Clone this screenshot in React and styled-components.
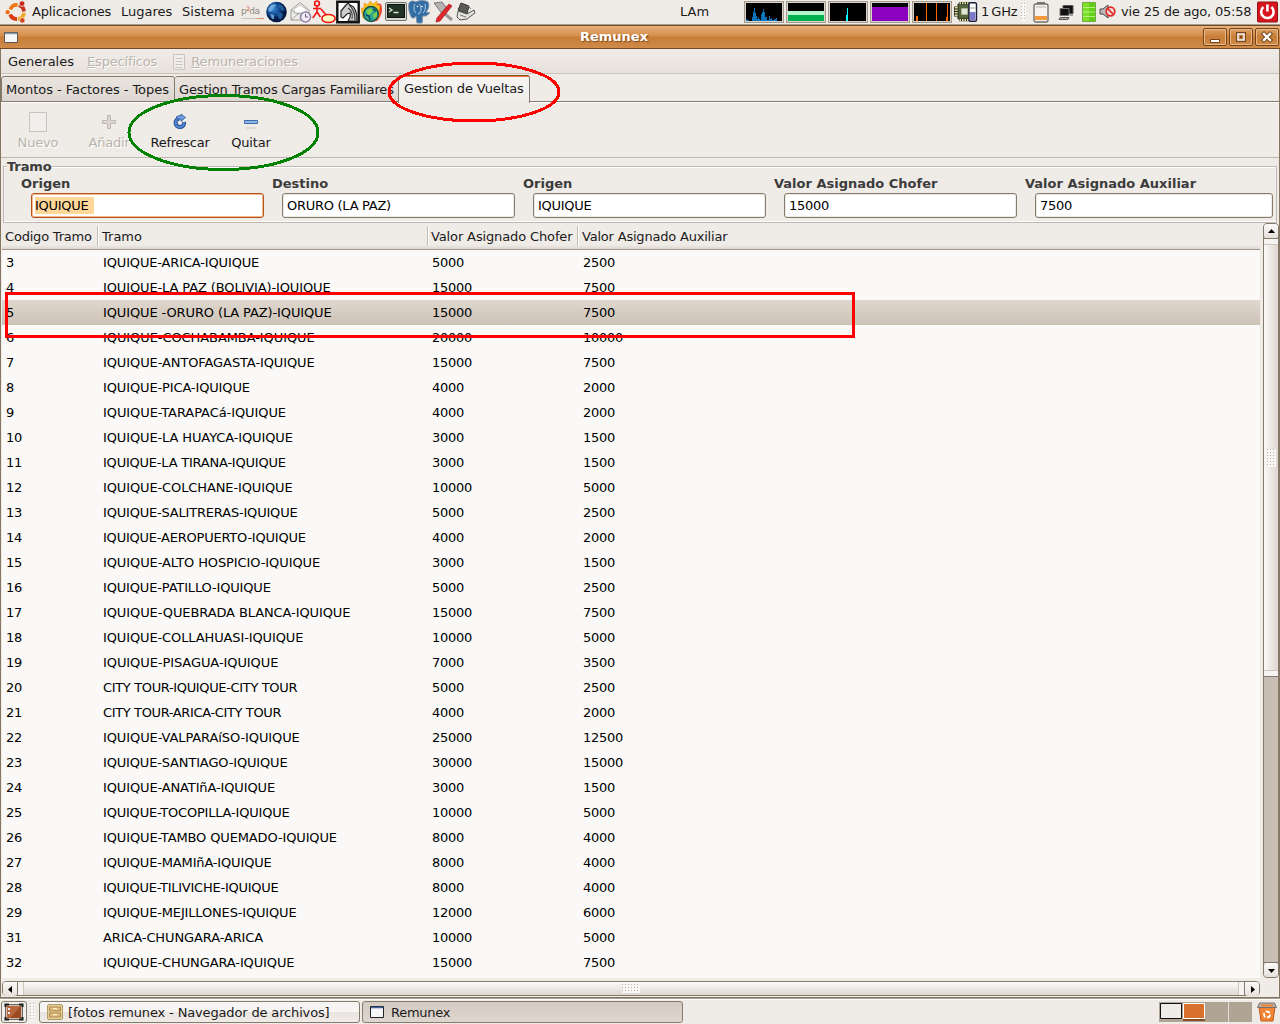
import React from "react";
import styled, { createGlobalStyle, css } from "styled-components";

const Global = createGlobalStyle`
  * { box-sizing: border-box; }
  html, body { margin: 0; padding: 0; overflow: hidden; }
  body { font: 13px/16px "DejaVu Sans", sans-serif; color: #1a1a1a; background: #efebe7; cursor: default; }
  svg { display: block; flex: none; }
`;

const Desktop = styled.div`
  position: relative;
  width: 1280px;
  height: 1024px;
  display: flex;
  flex-direction: column;
  overflow: hidden;
  white-space: nowrap;
  background: #efebe7;
`;

/* ---------- top panel ---------- */
const Panel = styled.header`
  height: 25px;
  flex: none;
  display: flex;
  align-items: center;
  background: #efebe6;
  border-bottom: 1px solid #a89c8c;
`;
const Slot = styled.div`
  flex: none;
  width: ${(p) => p.$w}px;
  margin-left: ${(p) => p.$gap || 0}px;
  letter-spacing: ${(p) => p.$ls || 0}px;
  word-spacing: ${(p) => p.$ws || 0}px;
`;
const Graph = styled.div`
  flex: none;
  width: 40px;
  height: 22px;
  margin-right: 2px;
  padding: 1px;
  border: 1px solid #a39a8e;
  background: #d9d3cb;
  svg { background: #000; }
`;
const dots = "conic-gradient(from 270deg at 1px 1px, #b9b0a5 90deg, #f8f6f4 0) 0 0 / 3px 3px";
const Grip = styled.i`
  flex: none;
  width: 5px;
  height: 18px;
  margin: 0 1px 0 ${(p) => p.$gap}px;
  background: ${dots};
`;

/* ---------- window ---------- */
const TitleBar = styled.div`
  height: 24px;
  flex: none;
  display: grid;
  grid-template-columns: 80px 1fr 80px;
  align-items: center;
  border-top: 1px solid #6e4a26;
  border-bottom: 1px solid #704a24;
  background: linear-gradient(#e9b27a 0, #e0a267 3px, #d58f4c 10px, #c67d37 11px, #d08b49 22px);
`;
const Title = styled.b`
  text-align: center;
  color: #fff;
  padding-right: 52px;
  text-shadow: 1px 1px 1px #7c4818;
`;
const WinButtons = styled.div`
  display: flex;
  gap: 2px;
  justify-content: flex-end;
  padding-right: 1px;
`;
const WinButton = styled.div`
  width: 24px;
  height: 18px;
  border: 1px solid #77431a;
  border-radius: 2px;
  box-shadow: inset 0 0 0 1px #e9b884;
  background: linear-gradient(#dda166, #c67d37 50%, #d08b49);
`;
const Body = styled.main`
  height: 949px;
  flex: none;
  display: flex;
  flex-direction: column;
  border-left: 1px solid #857563;
  border-right: 1px solid #857563;
  border-bottom: 1px solid #857563;
`;
const MenuBar = styled.nav`
  height: 25px;
  flex: none;
  display: flex;
  align-items: center;
  padding: 1px 7px 0;
  background: linear-gradient(#efebe7, #e8e2dd);
  border-bottom: 1px solid #cbc2b9;
`;
const MenuItem = styled.div`
  display: flex;
  align-items: center;
  gap: 5px;
  margin-right: ${(p) => p.$after || 0}px;
  letter-spacing: ${(p) => p.$ls || 0}px;
  ${(p) => p.$off && css`color: #b9b3ac; text-shadow: 1px 1px 0 #fff;`}
  u { text-underline-offset: 1px; }
`;
const Tabs = styled.div`
  height: 29px;
  flex: none;
  display: flex;
  align-items: flex-end;
  background: linear-gradient(#efebe7 27px, #857b6d 27px, #857b6d 28px, #fff 28px);
`;
const Tab = styled.div`
  width: ${(p) => p.$w}px;
  height: 26px;
  margin-bottom: 1px;
  padding: 5px 0 0 ${(p) => p.$pad}px;
  border: 1px solid #857b6d;
  border-left-width: ${(p) => (p.$first || p.$on ? 1 : 0)}px;
  border-radius: 3px 3px 0 0;
  background: linear-gradient(#eae5e0, #ddd6d0);
  letter-spacing: ${(p) => p.$ls || 0}px;
  ${(p) => p.$on && css`
    height: 28px;
    margin: 0 0 0 -1px;
    padding-top: 5px;
    border-top-color: #8a4a22;
    border-bottom: 0;
    background: linear-gradient(#f2763a 1px, #f7f5f3 1px, #efebe7);
  `}
`;
const ToolBar = styled.div`
  height: 55px;
  flex: none;
  display: flex;
  padding-top: 9px;
  border-bottom: 1px solid #bfb8af;
`;
const Tool = styled.div`
  width: ${(p) => p.$w}px;
  display: flex;
  flex-direction: column;
  align-items: center;
  gap: 3px;
  letter-spacing: ${(p) => p.$ls || 0}px;
  ${(p) => p.$off && css`color: #b9b3ac; text-shadow: 1px 1px 0 #fff;`}
`;
const Group = styled.section`
  height: 65px;
  flex: none;
  padding: 0 2px;
  display: flex;
  flex-direction: column;
`;
const Legend = styled.div`
  height: 17px;
  display: flex;
  align-items: center;
  font-weight: bold;
  color: #3c3c3c;
  letter-spacing: -0.1px;
  &::before, &::after {
    content: "";
    height: 2px;
    margin-top: 1px;
    background: linear-gradient(#bfb8b2 1px, #fff 1px);
  }
  &::before { width: 4px; }
  &::after { flex: 1; }
`;
const Fields = styled.div`
  flex: 1;
  display: grid;
  grid-template-columns: repeat(4, 251px) 1fr;
  padding: 0 3px 0 17px;
  margin-top: -8px;
  border: solid #bfb8b2;
  border-width: 0 1px 1px;
  background: linear-gradient(#fff, #fff) bottom / 100% 1px no-repeat;
`;
const Field = styled.label`
  padding-top: 9px;
  padding-right: ${(p) => (p.$last ? 0 : 8)}px;
  font-weight: bold;
  color: #3c3c3c;
`;
const Entry = styled.div`
  height: 25px;
  margin: 1px 0 0 10px;
  padding: 4px 4px;
  border: 1px solid ${(p) => (p.$focus ? "#b5531c" : "#857b6d")};
  border-radius: 3px;
  box-shadow: inset 0 0 0 1px ${(p) => (p.$focus ? "#f6b98c" : "#eeebe6")};
  background: #fff;
  color: #000;
  font-weight: normal;
  letter-spacing: -0.27px;
  mark { color: inherit; background: #ffd799; padding: 1px 5px 1px 0; margin-left: -1px; }
`;

/* ---------- table ---------- */
const Content = styled.div`
  flex: 1;
  min-height: 0;
  display: grid;
  grid-template-columns: 1259px 16px;
  column-gap: 3px;
  grid-template-rows: 755px 15px;
  row-gap: 3px;
`;
const Table = styled.div`
  margin-left: 1px;
  background: #faf9f7;
  color: #000;
  overflow: hidden;
`;
const HeadRow = styled.div`
  height: 27px;
  display: grid;
  grid-template-columns: 96px 330px 150px 1fr;
  align-items: center;
  background: linear-gradient(#efebe7 22px, #ddd7d0);
  border-bottom: 1px solid #a4968c;
`;
const HeadCell = styled.div`
  height: 20px;
  padding: 3px 0 0 ${(p) => p.$pad}px;
  color: #1a1a1a;
  letter-spacing: ${(p) => p.$ls}px;
  border-right: ${(p) => (p.$last ? 0 : 1)}px solid #c3bcb4;
  box-shadow: ${(p) => (p.$last ? "none" : "1px 0 #fff")};
`;
const Row = styled.div`
  height: 25px;
  display: grid;
  grid-template-columns: 97px 329px 151px 1fr;
  align-items: center;
  padding-left: 4px;
  letter-spacing: -0.27px;
  background: ${(p) => (p.$on ? "linear-gradient(#dfd7ce, #cdc2b6)" : "transparent")};
`;
const Name = styled.span`
  letter-spacing: ${(p) => p.$ls}px;
`;

/* ---------- scrollbars ---------- */
const VBar = styled.div`
  display: flex;
  flex-direction: column;
  border: 1px solid #857b6d;
  border-radius: 4px;
  background: #c9beb3;
`;
const HBar = styled.div`
  margin-left: 1px;
  display: flex;
  border: 1px solid #857b6d;
  border-radius: 4px;
  background: linear-gradient(#fbfaf9, #ded7d0);
`;
const ArrowBox = styled.div`
  width: 14px;
  height: 14px;
  flex: none;
  display: grid;
  place-items: center;
  border-radius: 3px;
  background: linear-gradient(#fbfaf9, #e6e0da);
`;
const VThumb = styled.div`
  height: 439px;
  display: grid;
  place-items: center;
  border: solid #857b6d;
  border-width: 1px 0;
  background:
    linear-gradient(#f6f4f2 5px, #cfc8c0 5px, #cfc8c0 6px, transparent 6px, transparent calc(100% - 6px), #cfc8c0 calc(100% - 6px), #cfc8c0 calc(100% - 5px), #f6f4f2 calc(100% - 5px)),
    linear-gradient(90deg, #fbfaf9, #ded5ce);
`;
const Trough = styled.div`
  flex: 1;
  border-bottom: 1px solid #857b6d;
`;
const HThumb = styled.div`
  flex: 1;
  display: grid;
  place-items: center;
  border: solid #857b6d;
  border-width: 0 1px;
  background:
    linear-gradient(90deg, #f6f4f2 5px, #cfc8c0 5px, #cfc8c0 6px, transparent 6px, transparent calc(100% - 6px), #cfc8c0 calc(100% - 6px), #cfc8c0 calc(100% - 5px), #f6f4f2 calc(100% - 5px)),
    linear-gradient(#fbfaf9, #ded7d0);
`;
const Dots = styled.i`
  width: ${(p) => p.$w}px;
  height: ${(p) => p.$h}px;
  background: ${dots};
`;

/* ---------- bottom panel ---------- */
const TaskBar = styled.footer`
  flex: 1;
  display: flex;
  align-items: center;
  padding-top: 2px;
  background: linear-gradient(#a89c8c 1px, #fff 1px, #fff 2px, #efebe6 2px);
`;
const Task = styled.div`
  width: ${(p) => p.$w}px;
  height: 22px;
  margin-right: 2px;
  padding-left: 7px;
  display: flex;
  align-items: center;
  gap: ${(p) => p.$gap}px;
  border: 1px solid #857b6d;
  border-radius: 3px;
  letter-spacing: ${(p) => p.$ls || 0}px;
  background: ${(p) => (p.$on ? "linear-gradient(#d3cac2, #ddd6cf)" : "linear-gradient(#f7f5f3 50%, #e9e4df 50%, #efebe7)")};
  span { padding-top: 2px; }
`;
const ShowDesktop = styled.div`
  width: 26px;
  height: 22px;
  margin-left: 1px;
  display: grid;
  place-items: center;
  border: 1px solid #857b6d;
  border-radius: 3px;
  background: #f2efec;
`;

const Annotations = styled.svg`
  position: absolute;
  left: 0;
  top: 0;
  pointer-events: none;
`;

const UbuntuLogo = () => (
  <svg width="22" height="24" viewBox="0 0 22 24">
    <g fill="none" strokeWidth="3.800">
      <path d="M5.400 9.500A7 7 0 0 1 12.600 5" stroke="#ee7a16" />
      <path d="M13.800 5.200A7 7 0 0 1 19 11.500" stroke="#c9301d" />
      <path d="M19 13A7 7 0 0 1 13 19" stroke="#f2a81c" />
      <path d="M12 19A7 7 0 0 1 5.200 14.500" stroke="#dc3a12" />
    </g>
    <circle cx="2.600" cy="12.200" r="2.100" fill="#f06a12" />
    <circle cx="17" cy="3.600" r="2.800" fill="#c9281a" stroke="#efebe6" strokeWidth=".8" />
    <circle cx="17.300" cy="20.400" r="2.700" fill="#d6421c" stroke="#efebe6" strokeWidth=".8" />
  </svg>
);
const BrandText = styled.div`
  font-size: 9px;
  line-height: 10px;
  color: #8c8680;
  letter-spacing: -0.6px;
  padding-bottom: 3px;
  background: linear-gradient(90deg, #c9c4be 70%, #e08a62 70%) 0 12px / 100% 1px no-repeat;
  sup { font-size: 6px; color: #d0401c; line-height: 0; vertical-align: 3px; }
`;
const Globe = () => (
  <svg width="22" height="22" viewBox="0 0 22 22">
    <defs><radialGradient id="glb" cx=".35" cy=".35"><stop offset="0" stopColor="#3b8ad6" /><stop offset=".6" stopColor="#11488f" /><stop offset="1" stopColor="#041a44" /></radialGradient></defs>
    <circle cx="10.500" cy="11" r="10.300" fill="url(#glb)" />
    <path d="M2 8l3-4 4-1 1 2-3 2-1 3-3 1zM4 13l4 1 0 4-2 0z" fill="#8cc4ec" opacity=".7" />
    <path d="M13 3l4 2 2 4-3 1-2-3-2-1zM11 11l5 1 1 3-3 4-2-3z" fill="#2a66a8" opacity=".8" />
  </svg>
);
const Mail = () => (
  <svg width="22" height="22" viewBox="0 0 22 22">
    <path d="M1 9L10 1.500 19 9v10H1z" fill="#ececea" stroke="#9a9a96" />
    <path d="M4 8l6-4 6 4v4H4z" fill="#fff" stroke="#c4c4c0" />
    <path d="M1 19l8-7 5 3M1 9l8 5" fill="none" stroke="#a8a8a4" />
    <circle cx="15.500" cy="16" r="5" fill="#f1eef6" stroke="#9482a8" strokeWidth="1.600" />
    <path d="M15.500 13v3h2.500" fill="none" stroke="#665878" />
  </svg>
);
const Actor = () => (
  <svg width="24" height="24" viewBox="0 0 24 24" fill="none" stroke="#f01414" strokeWidth="1.600">
    <circle cx="5" cy="3.400" r="2.400" />
    <path d="M5 6v6L.8 18M5 12l3.400 5M1 8.500h8M9 9l6 7" />
    <ellipse cx="16.500" cy="18.500" rx="6.600" ry="4" fill="#ffffc4" />
  </svg>
);
const Horse = () => (
  <svg width="24" height="24" viewBox="0 0 24 24">
    <path d="M1.300 1.800h21.400v20.400H1.300z" fill="#fff" stroke="#111" strokeWidth="2.400" />
    <path d="M5 11l5-6 2-2 2 2c4 1 7 6 7 16h-9c2-3 3-5 2-8l-3 1-4 4-2-1z" fill="#cfcfcf" stroke="#222" strokeWidth="1.200" />
    <path d="M13 5c4 3 6 8 6 15M12 8c3 2 5 6 4 11" stroke="#444" strokeWidth="1.200" fill="none" />
  </svg>
);
const FireGlobe = () => (
  <svg width="22" height="22" viewBox="0 0 22 22">
    <path d="M14 2l6 1c2 5 1 12-4 17l-8 1z" fill="#e8402a" />
    <path d="M0 7l3 0 0-5 4 2 2-4 3 3 4-3 0 4 3 0-1 12-8 4-8-3z" fill="#f7c21c" stroke="#ee8a1c" strokeWidth=".6" />
    <circle cx="10" cy="13" r="7.400" fill="#2aa596" stroke="#17564c" strokeWidth="1.500" />
    <path d="M5 10l4-3 3 2-2 4-3 1zM12 13l4-2v4l-3 3z" fill="#7fd04c" />
    <path d="M5 14l3 1 1 4M12 8l3 2" stroke="#123e58" strokeWidth="1.400" fill="none" />
  </svg>
);
const Term = () => (
  <svg width="22" height="20" viewBox="0 0 22 20">
    <rect x=".5" y=".5" width="21" height="18" rx="1.500" fill="#d8d8d2" stroke="#70706a" />
    <rect x="2.500" y="2.500" width="17" height="13" fill="#233323" stroke="#0c170c" />
    <path d="M4 6l3 2-3 2M8.500 10.500h5" fill="none" stroke="#d9ecd9" strokeWidth="1.300" />
  </svg>
);
const Elephant = () => (
  <svg width="23" height="24" viewBox="0 0 23 24">
    <path d="M1 3c2-3 5-2 7-1 3-2 9-2 12 0 2 4 0 8-2 10l4 1-4 3h-3c-1 1 0 4-1 7H9l-1-7-2 2H4C1 14 0 7 1 3z" fill="#336da5" stroke="#7d93a8" />
    <path d="M7 4c-2 4-1 7 1 9M11 4c2 2 3 5 1 9l-2 1M17 4c1 4 0 7-2 9" fill="none" stroke="#c2d6e8" strokeWidth=".9" />
    <circle cx="9.500" cy="6.500" r=".8" fill="#fff" /><circle cx="14" cy="6.500" r=".8" fill="#fff" />
  </svg>
);
const Tools = () => (
  <svg width="20" height="22" viewBox="0 0 20 22">
    <path d="M0 2l8-1 4 5-3 8z" fill="#b4b4b4" stroke="#666" strokeWidth=".8" />
    <path d="M10 12l8 7" stroke="#999" strokeWidth="3" />
    <path d="M15 3l3 2L6 20l-4 1 1-4z" fill="#e0262a" stroke="#a01418" strokeWidth=".7" />
  </svg>
);
const Hand = () => (
  <svg width="20" height="20" viewBox="0 0 20 20">
    <path d="M5 1l8 3-2 8-9-4z" fill="#5a5a5a" stroke="#333" />
    <path d="M2 9l9 3 7-4 1 3-8 6-7 1-3-3z" fill="#e4e2de" stroke="#555" />
    <path d="M4 13l6 2M12 4l3 3" stroke="#777" />
  </svg>
);
const Cpu = () => (
  <svg width="24" height="20" viewBox="0 0 24 20">
    <path d="M4 2h13v15H4z" fill="#54643c" stroke="#20281a" />
    <path d="M5 1.200h11M5 18h11" stroke="#20281a" strokeWidth="2.400" />
    <path d="M5.500 1.200h11M5.500 18h11" stroke="#e8e4a8" strokeWidth="2" strokeDasharray="1.500 1" />
    <path d="M2 4.500v10" stroke="#20281a" strokeWidth="4" />
    <path d="M2.200 5v9" stroke="#d9d89a" strokeWidth="3" strokeDasharray="1.500 1" />
    <path d="M7.500 6.500h6v6h-6z" fill="#e4e6dc" stroke="#a9b090" />
    <rect x="15" y=".7" width="7.500" height="18.500" rx="1.500" fill="#fff" stroke="#1a1f3c" strokeWidth="1.400" />
    <path d="M16 10h5.500v8H16z" fill="#7c78cc" />
    <path d="M16 6h5.500" stroke="#999" />
  </svg>
);
const Battery = () => (
  <svg width="16" height="22" viewBox="0 0 16 22">
    <path d="M4 1h8v3H4z" fill="#777" />
    <rect x="1" y="3" width="14" height="18" rx="2" fill="#f4f3f0" stroke="#74706a" strokeWidth="1.400" />
    <path d="M2 15h12v4H2z" fill="#f39a3c" /><path d="M3 6h10" stroke="#b4b0aa" />
  </svg>
);
const Network = () => (
  <svg width="16" height="17" viewBox="0 0 16 17">
    <path d="M5 1.500h10v8H5z" fill="#111" stroke="#555" />
    <path d="M2 4.500h9v7H2z" fill="#111" stroke="#777" />
    <path d="M2 13.500h9l-1 2H1zM12 11h3" stroke="#555" fill="#aaa" />
  </svg>
);
const Level = () => (
  <svg width="14" height="20" viewBox="0 0 14 20">
    <path d="M.5.5h13v19H.5z" fill="#7fe02c" stroke="#72a848" />
    <path d="M7 1h6v18H7z" fill="#5fcf18" /><path d="M1 5.500h12M1 10h12M1 14.500h12" stroke="#b6ee84" />
  </svg>
);
const Speaker = () => (
  <svg width="17" height="16" viewBox="0 0 17 16">
    <path d="M1 5h3l5-4v13l-5-4H1z" fill="#b9b9b9" stroke="#444" />
    <circle cx="11.500" cy="7.500" r="4.300" fill="#f3d6d6" stroke="#e02828" strokeWidth="1.700" />
    <path d="M8.500 4.500l6 6" stroke="#e02828" strokeWidth="1.700" />
  </svg>
);
const Power = () => (
  <svg width="21" height="22" viewBox="0 0 21 22">
    <rect x=".5" y="1" width="20" height="20" rx="1" fill="#d8151c" stroke="#8d1214" />
    <path d="M6.400 6.100a6.200 6.200 0 1 0 8 0M10.400 3.500v7" fill="none" stroke="#fff" strokeWidth="2.600" />
  </svg>
);
const MiniWindow = ({ w = 14, h = 11, bar = "#51618c", line = "#222" }) => (
  <svg width={w} height={h} viewBox={`0 0 ${w} ${h}`}>
    <path d={`M.5.5h${w - 1}v${h - 1}h-${w - 1}z`} fill="#f7f7f7" stroke={line} />
    <path d={`M1 1.500h${w - 2}`} stroke={bar} strokeWidth="1.500" />
  </svg>
);
const Sheet = ({ w, h, lines }) => (
  <svg width={w} height={h} viewBox={`0 0 ${w} ${h}`}>
    <path d={`M1.500 .5h${w - 3}v${h - 1}h-${w - 3}z`} fill="#f1eeeb" stroke="#c9c3bd" />
    {lines && <path d="M3.500 4.500h7M3.500 7.500h7M3.500 10.500h7M3.500 13.500h7" stroke="#c9c3bd" />}
  </svg>
);
const Plus = () => (
  <svg width="20" height="20" viewBox="0 0 20 20">
    <path d="M8.500 3.500h3v5h5v3h-5v5h-3v-5h-5v-3h5z" fill="#dcd7d2" stroke="#bfb9b3" />
  </svg>
);
const Minus = () => (
  <svg width="20" height="20" viewBox="0 0 20 20">
    <path d="M3.500 8.500h13v3h-13z" fill="#8fb6e4" stroke="#3a6cae" />
    <path d="M5 16h10" stroke="#d8d3ce" strokeWidth="1.500" />
  </svg>
);
const Refresh = () => (
  <svg width="20" height="20" viewBox="0 0 20 20">
    <path d="M9.500 6.500A4.300 4.300 0 1 0 14.100 10" fill="none" stroke="#1f4b94" strokeWidth="4" />
    <path d="M9.500 6.500A4.300 4.300 0 1 0 14.100 10.400" fill="none" stroke="#5485d0" strokeWidth="2.200" />
    <path d="M6.500 4.500c1.500-.8 3-1 4.500-1V2l4.500 3.500-4.500 4V7l-3 .3z" fill="#6d9de0" stroke="#1f4b94" strokeWidth=".7" />
  </svg>
);
const Arrow = ({ d }) => (
  <svg width="9" height="9" viewBox="0 0 9 9"><path d={d} fill="#000" /></svg>
);
const Cabinet = () => (
  <svg width="16" height="16" viewBox="0 0 16 16">
    <rect x=".5" y=".5" width="15" height="15" rx="1.500" fill="#e2cf9f" stroke="#b59c62" />
    <path d="M2.500 3h11v4h-11zM2.500 9h11v4h-11z" fill="#dfb87c" stroke="#b08d4e" />
    <path d="M6 4.700h4M6 10.700h4" stroke="#fff3d0" strokeWidth="1.300" />
  </svg>
);
const DesktopIcon = () => (
  <svg width="20" height="18" viewBox="0 0 20 18">
    <path d="M1 1h18v16H1z" fill="#c9c3bc" />
    <path d="M3 3h14v12H3z" fill="#9b4a22" /><path d="M3 3h14L6 15H3z" fill="#b8683c" />
    <path d="M1.500 4V1.500H5M15 1.500h3.500V4M18.500 14v2.500H15M5 16.500H1.500V14" fill="none" stroke="#1b1b1b" strokeWidth="2" />
    <path d="M1.500 4v10M18.500 4v10M5 1.500h10M5 16.500h10" stroke="#6b6560" />
    <path d="M4 5h2v2H4zM4 9h2v2H4z" fill="#eee" />
  </svg>
);
const Pager = () => (
  <svg width="93" height="20" viewBox="0 0 93 20">
    <path d="M0 0h93v20H0z" fill="#b0a495" />
    <path d="M1.500 1.500h21v15h-21z" fill="#efebe6" stroke="#111" />
    <path d="M24.500 1.500h21v15h-21z" fill="#d8712d" stroke="#fff" />
    <path d="M24 18h22" stroke="#8a4a20" strokeWidth="2" />
    <path d="M69.500 0v20" stroke="#e4ded6" />
  </svg>
);
const Trash = () => (
  <svg width="20" height="20" viewBox="0 0 20 20">
    <path d="M2 5h16l-2 14H4z" fill="#f08432" stroke="#c65a18" />
    <path d="M2.500 1h15l2 4.500H.5z" fill="#b7b2ac" stroke="#77716a" />
    <path d="M4 3.500h12" stroke="#f08432" strokeWidth="2" />
    <circle cx="10" cy="12.500" r="3" fill="none" stroke="#fff" strokeWidth="1.800" strokeDasharray="4.600 1.600" />
  </svg>
);

/* code, route, driver amount, assistant amount, tracking of the route text */
const rows = [
  [3, "IQUIQUE-ARICA-IQUIQUE", 5000, 2500, -0.15],
  [4, "IQUIQUE-LA PAZ (BOLIVIA)-IQUIQUE", 15000, 7500, -0.12],
  [5, "IQUIQUE -ORURO (LA PAZ)-IQUIQUE", 15000, 7500, -0.12],
  [6, "IQUIQUE-COCHABAMBA-IQUIQUE", 20000, 10000, -0.08],
  [7, "IQUIQUE-ANTOFAGASTA-IQUIQUE", 15000, 7500, -0.1],
  [8, "IQUIQUE-PICA-IQUIQUE", 4000, 2000, -0.13],
  [9, "IQUIQUE-TARAPACá-IQUIQUE", 4000, 2000, -0.08],
  [10, "IQUIQUE-LA HUAYCA-IQUIQUE", 3000, 1500, -0.12],
  [11, "IQUIQUE-LA TIRANA-IQUIQUE", 3000, 1500, -0.22],
  [12, "IQUIQUE-COLCHANE-IQUIQUE", 10000, 5000, -0.12],
  [13, "IQUIQUE-SALITRERAS-IQUIQUE", 5000, 2500, -0.19],
  [14, "IQUIQUE-AEROPUERTO-IQUIQUE", 4000, 2000, -0.22],
  [15, "IQUIQUE-ALTO HOSPICIO-IQUIQUE", 3000, 1500, -0.1],
  [16, "IQUIQUE-PATILLO-IQUIQUE", 5000, 2500, -0.16],
  [17, "IQUIQUE-QUEBRADA BLANCA-IQUIQUE", 15000, 7500, -0.1],
  [18, "IQUIQUE-COLLAHUASI-IQUIQUE", 10000, 5000, -0.12],
  [19, "IQUIQUE-PISAGUA-IQUIQUE", 7000, 3500, -0.08],
  [20, "CITY TOUR-IQUIQUE-CITY TOUR", 5000, 2500, -0.35],
  [21, "CITY TOUR-ARICA-CITY TOUR", 4000, 2000, -0.37],
  [22, "IQUIQUE-VALPARAíSO-IQUIQUE", 25000, 12500, -0.1],
  [23, "IQUIQUE-SANTIAGO-IQUIQUE", 30000, 15000, -0.16],
  [24, "IQUIQUE-ANATIñA-IQUIQUE", 3000, 1500, -0.13],
  [25, "IQUIQUE-TOCOPILLA-IQUIQUE", 10000, 5000, -0.2],
  [26, "IQUIQUE-TAMBO QUEMADO-IQUIQUE", 8000, 4000, -0.13],
  [27, "IQUIQUE-MAMIñA-IQUIQUE", 8000, 4000, -0.16],
  [28, "IQUIQUE-TILIVICHE-IQUIQUE", 8000, 4000, -0.24],
  [29, "IQUIQUE-MEJILLONES-IQUIQUE", 12000, 6000, -0.16],
  [31, "ARICA-CHUNGARA-ARICA", 10000, 5000, -0.12],
  [32, "IQUIQUE-CHUNGARA-IQUIQUE", 15000, 7500, -0.12],
];

const fields = [
  ["Origen", "IQUIQUE"],
  ["Destino", "ORURO (LA PAZ)"],
  ["Origen", "IQUIQUE"],
  ["Valor Asignado Chofer", "15000"],
  ["Valor Asignado Auxiliar", "7500"],
];

const Plot = ({ children }) => (
  <Graph><svg width="36" height="18" viewBox="0 0 36 18" shapeRendering="crispEdges">{children}</svg></Graph>
);

export default function App() {
  return (
    <Desktop>
      <Global />
      <Panel>
        <Slot $w={22} $gap={5}><UbuntuLogo /></Slot>
        <Slot $w={80} $gap={5} $ls={-0.17}>Aplicaciones</Slot>
        <Slot $w={52} $gap={9}>Lugares</Slot>
        <Slot $w={54} $gap={9} $ls={0.05}>Sistema</Slot>
        <Slot $w={23} $gap={5}><BrandText>p<sup>2</sup>da</BrandText></Slot>
        <Slot $w={22} $gap={2}><Globe /></Slot>
        <Slot $w={22} $gap={2}><Mail /></Slot>
        <Slot $w={24} $gap={0}><Actor /></Slot>
        <Slot $w={24} $gap={0}><Horse /></Slot>
        <Slot $w={22} $gap={1}><FireGlobe /></Slot>
        <Slot $w={22} $gap={2}><Term /></Slot>
        <Slot $w={23} $gap={1}><Elephant /></Slot>
        <Slot $w={20} $gap={3}><Tools /></Slot>
        <Slot $w={20} $gap={2}><Hand /></Slot>
        <Slot $w={64} $gap={204}>LAm</Slot>
        <Plot><path d="M0 18v-2h1v1h2v1h3v-4h1V9h1V5h1v5h1v3h1v3h1v-2h1v2h1v1h1v-6h1V9h1V6h1v3h1v5h2v3h2v-4h1v3h1v-1h1v2h2v-1h2v-1h1v3z" fill="#0a74bd" /></Plot>
        <Plot><path d="M0 8h36v4H0z" fill="#b4f5ce" /><path d="M0 12h36v6H0z" fill="#00b050" /></Plot>
        <Plot><path d="M16 18v-6h1V5h1v13z" fill="#0ff" /></Plot>
        <Plot><path d="M0 4h36v14H0z" fill="#8c00c0" /></Plot>
        <Plot><path d="M2 18v-5h2v5zM12 0h1v18h-1zM22 0h1v18h-1zM32 18v-4h1V1h1v17z" fill="#f60" /></Plot>
        <Slot $w={24} $gap={0}><Cpu /></Slot>
        <Slot $w={38} $gap={3} $ls={-0.1} $ws={-2}>1 GHz</Slot>
        <Grip $gap={2} />
        <Slot $w={16} $gap={6}><Battery /></Slot>
        <Slot $w={16} $gap={9}><Network /></Slot>
        <Slot $w={14} $gap={8}><Level /></Slot>
        <Slot $w={17} $gap={3}><Speaker /></Slot>
        <Slot $w={132} $gap={5} $ls={-0.2}>vie 25 de ago, 05:58</Slot>
        <Slot $w={21} $gap={4}><Power /></Slot>
      </Panel>

      <TitleBar>
        <Slot $w={14} $gap={4}><MiniWindow bar="#8c96ac" line="#5b5750" /></Slot>
        <Title>Remunex</Title>
        <WinButtons>
          <WinButton><svg width="22" height="16"><path d="M6.500 10.500h9v3h-9z" fill="#fff" stroke="#77431a" /></svg></WinButton>
          <WinButton><svg width="22" height="16"><path d="M7.500 4.500h7v7h-7z" fill="none" stroke="#77431a" strokeWidth="3" /><path d="M8 5h6v6H8z" fill="none" stroke="#fff" strokeWidth="1.600" /><path d="M10 7h2v2h-2z" fill="#77431a" /></svg></WinButton>
          <WinButton><svg width="22" height="16" strokeLinecap="square"><path d="M8 5l6 6M14 5l-6 6" stroke="#77431a" strokeWidth="4.400" /><path d="M8 5l6 6M14 5l-6 6" stroke="#fff" strokeWidth="2.400" /></svg></WinButton>
        </WinButtons>
      </TitleBar>

      <Body>
        <MenuBar>
          <MenuItem $after={13}>Generales</MenuItem>
          <MenuItem $off $after={15} $ls={-0.17}><span><u>E</u>specíficos</span></MenuItem>
          <MenuItem $off $ls={-0.15}><Sheet w={14} h={16} lines /><span><u>R</u>emuneraciones</span></MenuItem>
        </MenuBar>
        <Tabs>
          <Tab $w={174} $pad={4} $ls={-0.05} $first>Montos - Factores - Topes</Tab>
          <Tab $w={224} $pad={4} $ls={-0.15}>Gestion Tramos Cargas Familiares</Tab>
          <Tab $w={132} $pad={5} $ls={-0.13} $on>Gestion de Vueltas</Tab>
        </Tabs>
        <ToolBar>
          <Tool $w={74} $ls={-0.15} $off><Sheet w={20} h={20} />Nuevo</Tool>
          <Tool $w={68} $ls={-0.2} $off><Plus />Añadir</Tool>
          <Tool $w={74} $ls={-0.25}><Refresh />Refrescar</Tool>
          <Tool $w={68} $ls={-0.15}><Minus />Quitar</Tool>
        </ToolBar>
        <Group>
          <Legend>Tramo</Legend>
          <Fields>
            {fields.map(([label, value], i) => (
              <Field key={i} $last={i === 4}>
                {label}
                <Entry $focus={i === 0}>{i === 0 ? <mark>{value}</mark> : value}</Entry>
              </Field>
            ))}
          </Fields>
        </Group>
        <Content>
          <Table>
            <HeadRow>
              <HeadCell $pad={3} $ls={-0.2}>Codigo Tramo</HeadCell>
              <HeadCell $pad={4} $ls={0}>Tramo</HeadCell>
              <HeadCell $pad={3} $ls={-0.13}>Valor Asignado Chofer</HeadCell>
              <HeadCell $pad={4} $ls={-0.2} $last>Valor Asignado Auxiliar</HeadCell>
            </HeadRow>
            {rows.map(([code, name, driver, aux, ls]) => (
              <Row key={code} $on={code === 5}>
                <span>{code}</span>
                <Name $ls={ls}>{name}</Name>
                <span>{driver}</span>
                <span>{aux}</span>
              </Row>
            ))}
          </Table>
          <VBar>
            <ArrowBox><Arrow d="M4.500 2L8 6H1z" /></ArrowBox>
            <VThumb><Dots $w={9} $h={18} /></VThumb>
            <Trough />
            <ArrowBox><Arrow d="M4.500 7L8 3H1z" /></ArrowBox>
          </VBar>
          <HBar>
            <ArrowBox><Arrow d="M2 4.500L6 1v7z" /></ArrowBox>
            <HThumb><Dots $w={18} $h={9} /></HThumb>
            <ArrowBox><Arrow d="M7 4.500L3 1v7z" /></ArrowBox>
          </HBar>
        </Content>
      </Body>

      <TaskBar>
        <ShowDesktop><DesktopIcon /></ShowDesktop>
        <Grip $gap={3} />
        <Slot $w={3} />
        <Task $w={321} $gap={5} $ls={-0.15}><Cabinet /><span>[fotos remunex - Navegador de archivos]</span></Task>
        <Task $w={321} $gap={7} $ls={-0.25} $on><MiniWindow h={12} bar="#3c64a0" /><span>Remunex</span></Task>
        <Slot $w={93} $gap={474}><Pager /></Slot>
        <Slot $w={20} $gap={5}><Trash /></Slot>
      </TaskBar>

      <Annotations width="1280" height="1024" viewBox="0 0 1280 1024" fill="none" strokeWidth="3" shapeRendering="crispEdges">
        <ellipse cx="474" cy="92" rx="85" ry="29" stroke="#f00" />
        <ellipse cx="223.500" cy="132.500" rx="94.500" ry="37" stroke="#008200" />
        <path d="M6.500 293.500h847v43h-847z" stroke="#f00" />
      </Annotations>
    </Desktop>
  );
}
